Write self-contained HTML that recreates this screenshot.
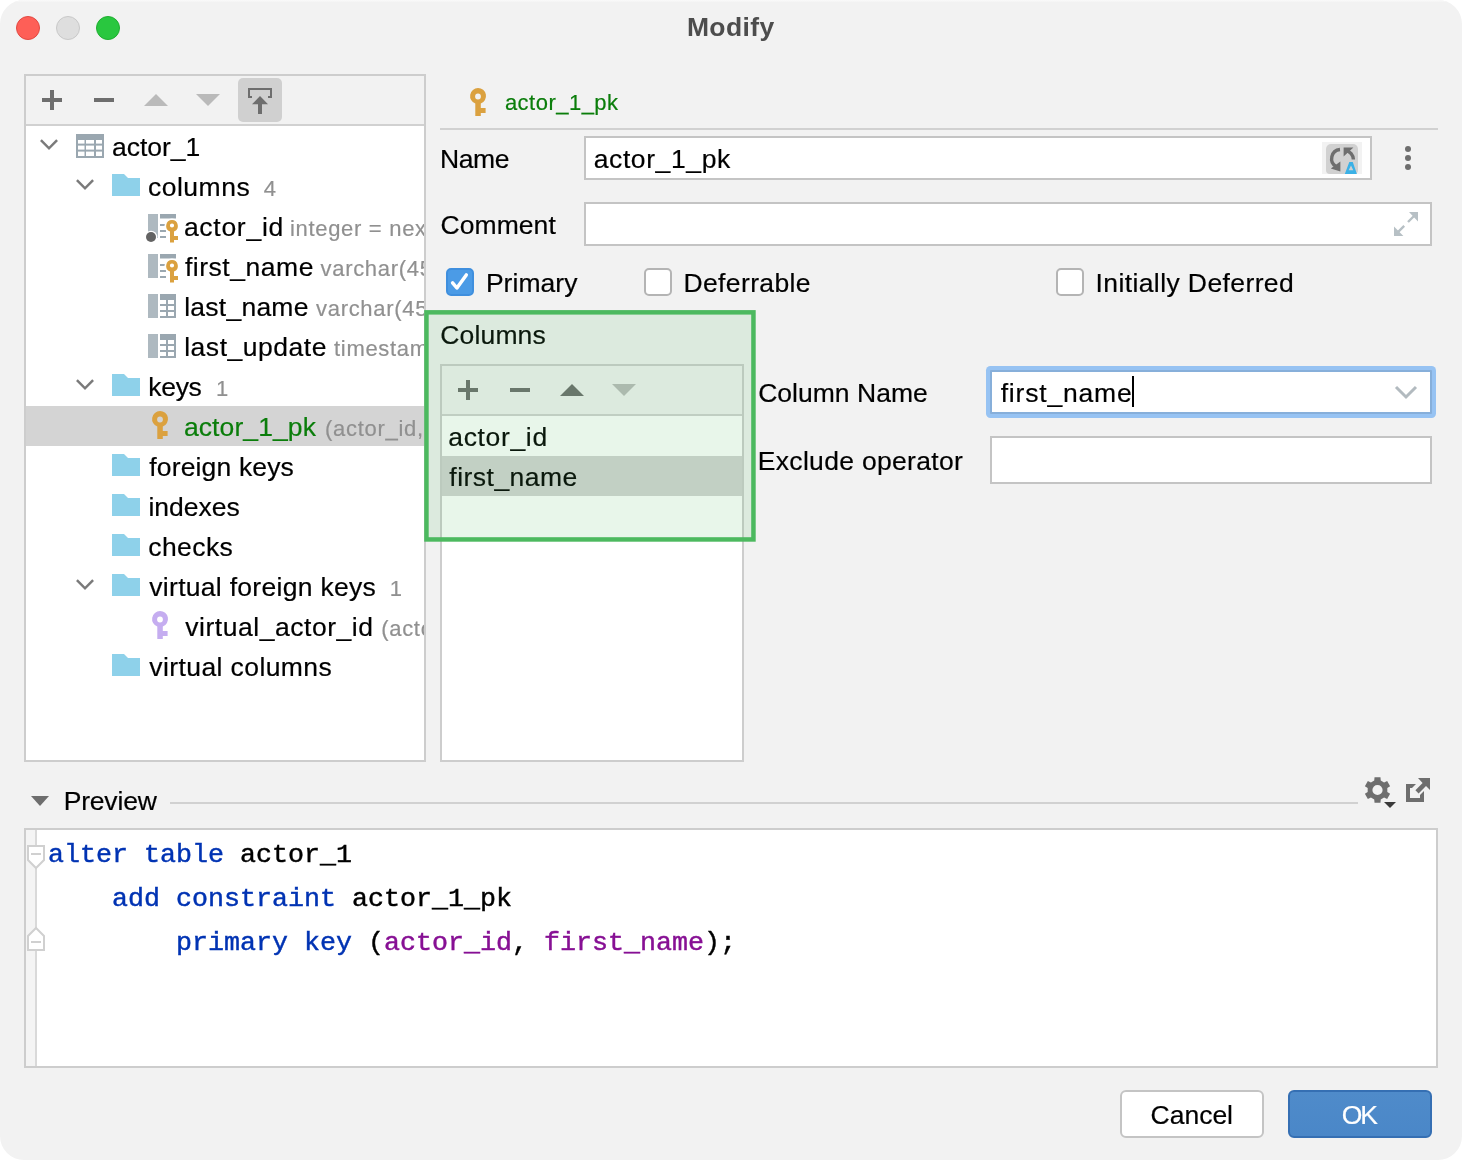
<!DOCTYPE html>
<html><head><meta charset="utf-8"><title>Modify</title>
<style>
*{box-sizing:border-box;margin:0;padding:0}
html,body{width:1462px;height:1160px;background:#fff;overflow:hidden}
body{font-family:"Liberation Sans",sans-serif;color:#000;position:relative}
#win{position:absolute;left:0;top:0;width:1462px;height:1160px;background:#f2f2f2;border-radius:24px;overflow:hidden}
.a{position:absolute}
.t{position:absolute;white-space:pre;line-height:40px;height:40px;-webkit-text-stroke:0.2px}
.clip{position:absolute;left:0;top:0;height:1160px;overflow:hidden}
.tl{position:absolute;top:16px;width:24px;height:24px;border-radius:50%}
.box{position:absolute;border:2px solid #cdcdcd;background:#fff}
.inp{position:absolute;border:2px solid #c4c4c4;background:#fff}
.mono{font-family:"Liberation Mono",monospace;font-size:26.66px;position:absolute;white-space:pre;line-height:44px;height:44px;left:48px;color:#000;-webkit-text-stroke:0.45px}
.kw{color:#0033b3}.id{color:#871094}
svg{position:absolute;overflow:visible}
#txt{position:absolute;left:0;top:0;width:1462px;height:1160px;will-change:transform}
.cb{position:absolute;top:268px;width:28px;height:28px;border:2px solid #b4b4b4;border-radius:5px;background:#fff}
</style></head><body>
<div id="win">
<div class="a" style="left:0;top:0;width:1462px;height:2px;background:linear-gradient(#fafafa,#f4f4f4)"></div>
<div class="tl" style="left:16px;background:#fe5f57;border:1px solid #e14942"></div>
<div class="tl" style="left:56px;background:#dedede;border:1px solid #c8c8c8"></div>
<div class="tl" style="left:96px;background:#29c73f;border:1px solid #1fae30"></div>
<div class="box" style="left:24px;top:74px;width:402px;height:688px"></div>
<div class="a" style="left:26px;top:76px;width:398px;height:48px;background:#f2f2f2"></div>
<div class="a" style="left:26px;top:124px;width:398px;height:2px;background:#d1d1d1"></div>
<svg style="left:42px;top:90px" width="20" height="20" viewBox="0 0 20 20"><path d="M8 0h4v8h8v4h-8v8h-4v-8h-8v-4h8z" fill="#6e6e6e"/></svg>
<svg style="left:94px;top:98px" width="20" height="4" viewBox="0 0 20 4"><rect width="20" height="4" fill="#6e6e6e"/></svg>
<svg style="left:144px;top:94px" width="24" height="12" viewBox="0 0 24 12"><path d="M12 0L24 12H0z" fill="#bababa"/></svg>
<svg style="left:196px;top:94px" width="24" height="12" viewBox="0 0 24 12"><path d="M0 0H24L12 12z" fill="#bababa"/></svg>
<div class="a" style="left:238px;top:78px;width:44px;height:44px;background:#d0d0d0;border-radius:5px"></div>
<svg style="left:248px;top:88px" width="24" height="26" viewBox="0 0 24 26"><path d="M0 10V0H24V10H20V8H22V2H2V8H4V10Z" fill="#6e6e6e"/><path d="M12 8L20 16.3H14V26H10V16.3H4Z" fill="#6e6e6e"/></svg>
<div class="a" style="left:26px;top:406px;width:398px;height:40px;background:#d4d4d4"></div>
<svg style="left:39.2px;top:137.6px" width="20" height="12" viewBox="0 0 20 12"><path d="M1.9 2.2L10 10.3L18.1 2.2" fill="none" stroke="#7a7a7a" stroke-width="2.5"/></svg>
<svg style="left:76px;top:134px" width="28" height="24" viewBox="0 0 28 24"><rect width="28" height="24" fill="#9aa7b0"/><rect x="2" y="6" width="6.5" height="3.5999999999999996" fill="#fff"/><rect x="2" y="11.6" width="6.5" height="4.0" fill="#fff"/><rect x="2" y="17.6" width="6.5" height="4.399999999999999" fill="#fff"/><rect x="10" y="6" width="8" height="3.5999999999999996" fill="#fff"/><rect x="10" y="11.6" width="8" height="4.0" fill="#fff"/><rect x="10" y="17.6" width="8" height="4.399999999999999" fill="#fff"/><rect x="20" y="6" width="6" height="3.5999999999999996" fill="#fff"/><rect x="20" y="11.6" width="6" height="4.0" fill="#fff"/><rect x="20" y="17.6" width="6" height="4.399999999999999" fill="#fff"/></svg>
<svg style="left:75px;top:177.6px" width="20" height="12" viewBox="0 0 20 12"><path d="M1.9 2.2L10 10.3L18.1 2.2" fill="none" stroke="#7a7a7a" stroke-width="2.5"/></svg>
<svg style="left:112px;top:174px" width="28" height="22" viewBox="0 0 28 22"><path d="M0 0H12L16 4H28V22H0z" fill="#8ed1ea"/></svg>
<svg style="left:148px;top:214px" width="28" height="24" viewBox="0 0 28 24"><rect x="0" y="0" width="10" height="24" fill="#aeb9c0"/><rect x="12" y="0" width="16" height="4.5" fill="#9aa7b0"/><rect x="12" y="10" width="6" height="2" fill="#9aa7b0"/><rect x="12" y="16" width="6" height="2" fill="#9aa7b0"/><rect x="12" y="22" width="6" height="2" fill="#9aa7b0"/><circle cx="24" cy="12" r="7.6" fill="#fff"/><rect x="20.5" y="14" width="7" height="15" fill="#fff"/><rect x="24" y="20.5" width="7.5" height="7" fill="#fff"/><path fill-rule="evenodd" d="M24 6A6 6 0 0 1 26 17.6V22H30V26H26V28.4H22V17.6A6 6 0 0 1 24 6ZM24 9.4A2.1 2.1 0 1 0 24 13.6A2.1 2.1 0 1 0 24 9.4Z" fill="#dba13f"/><circle cx="3" cy="23" r="6.3" fill="#fff"/><circle cx="3" cy="23" r="5" fill="#636363"/></svg>
<svg style="left:148px;top:254px" width="28" height="24" viewBox="0 0 28 24"><rect x="0" y="0" width="10" height="24" fill="#aeb9c0"/><rect x="12" y="0" width="16" height="4.5" fill="#9aa7b0"/><rect x="12" y="10" width="6" height="2" fill="#9aa7b0"/><rect x="12" y="16" width="6" height="2" fill="#9aa7b0"/><rect x="12" y="22" width="6" height="2" fill="#9aa7b0"/><circle cx="24" cy="12" r="7.6" fill="#fff"/><rect x="20.5" y="14" width="7" height="15" fill="#fff"/><rect x="24" y="20.5" width="7.5" height="7" fill="#fff"/><path fill-rule="evenodd" d="M24 6A6 6 0 0 1 26 17.6V22H30V26H26V28.4H22V17.6A6 6 0 0 1 24 6ZM24 9.4A2.1 2.1 0 1 0 24 13.6A2.1 2.1 0 1 0 24 9.4Z" fill="#dba13f"/></svg>
<svg style="left:148px;top:294px" width="28" height="24" viewBox="0 0 28 24"><rect x="0" y="0" width="10" height="24" fill="#aeb9c0"/><rect x="12" y="0" width="16" height="24" fill="#9aa7b0"/><rect x="12" y="6" width="6" height="4" fill="#fff"/><rect x="20" y="6" width="6" height="4" fill="#fff"/><rect x="12" y="12" width="6" height="4" fill="#fff"/><rect x="20" y="12" width="6" height="4" fill="#fff"/><rect x="12" y="18" width="6" height="4" fill="#fff"/><rect x="20" y="18" width="6" height="4" fill="#fff"/></svg>
<svg style="left:148px;top:334px" width="28" height="24" viewBox="0 0 28 24"><rect x="0" y="0" width="10" height="24" fill="#aeb9c0"/><rect x="12" y="0" width="16" height="24" fill="#9aa7b0"/><rect x="12" y="6" width="6" height="4" fill="#fff"/><rect x="20" y="6" width="6" height="4" fill="#fff"/><rect x="12" y="12" width="6" height="4" fill="#fff"/><rect x="20" y="12" width="6" height="4" fill="#fff"/><rect x="12" y="18" width="6" height="4" fill="#fff"/><rect x="20" y="18" width="6" height="4" fill="#fff"/></svg>
<svg style="left:75px;top:377.6px" width="20" height="12" viewBox="0 0 20 12"><path d="M1.9 2.2L10 10.3L18.1 2.2" fill="none" stroke="#7a7a7a" stroke-width="2.5"/></svg>
<svg style="left:112px;top:374px" width="28" height="22" viewBox="0 0 28 22"><path d="M0 0H12L16 4H28V22H0z" fill="#8ed1ea"/></svg>
<svg style="left:152.3px;top:411.4px" width="16" height="28" viewBox="0 0 16 28"><path fill-rule="evenodd" d="M8 0A8 8 0 0 1 10.8 15.5V20H15.6V25H10.8V28H5.3V15.5A8 8 0 0 1 8 0ZM8 5.6A2.9 2.9 0 1 0 8 11.4A2.9 2.9 0 1 0 8 5.6Z" fill="#dba13f"/></svg>
<svg style="left:112px;top:454px" width="28" height="22" viewBox="0 0 28 22"><path d="M0 0H12L16 4H28V22H0z" fill="#8ed1ea"/></svg>
<svg style="left:112px;top:494px" width="28" height="22" viewBox="0 0 28 22"><path d="M0 0H12L16 4H28V22H0z" fill="#8ed1ea"/></svg>
<svg style="left:112px;top:534px" width="28" height="22" viewBox="0 0 28 22"><path d="M0 0H12L16 4H28V22H0z" fill="#8ed1ea"/></svg>
<svg style="left:75px;top:577.6px" width="20" height="12" viewBox="0 0 20 12"><path d="M1.9 2.2L10 10.3L18.1 2.2" fill="none" stroke="#7a7a7a" stroke-width="2.5"/></svg>
<svg style="left:112px;top:574px" width="28" height="22" viewBox="0 0 28 22"><path d="M0 0H12L16 4H28V22H0z" fill="#8ed1ea"/></svg>
<svg style="left:152.3px;top:611.4px" width="16" height="28" viewBox="0 0 16 28"><path fill-rule="evenodd" d="M8 0A8 8 0 0 1 10.8 15.5V20H15.6V25H10.8V28H5.3V15.5A8 8 0 0 1 8 0ZM8 5.6A2.9 2.9 0 1 0 8 11.4A2.9 2.9 0 1 0 8 5.6Z" fill="#c5adf0"/></svg>
<svg style="left:112px;top:654px" width="28" height="22" viewBox="0 0 28 22"><path d="M0 0H12L16 4H28V22H0z" fill="#8ed1ea"/></svg>
<svg style="left:470.3px;top:88px" width="16" height="28" viewBox="0 0 16 28"><path fill-rule="evenodd" d="M8 0A8 8 0 0 1 10.8 15.5V20H15.6V25H10.8V28H5.3V15.5A8 8 0 0 1 8 0ZM8 5.6A2.9 2.9 0 1 0 8 11.4A2.9 2.9 0 1 0 8 5.6Z" fill="#dba13f"/></svg>
<div class="a" style="left:440px;top:128px;width:998px;height:2px;background:#d1d1d1"></div>
<div class="inp" style="left:584px;top:136px;width:788px;height:44px"></div>
<div class="a" style="left:1322px;top:142px;width:40px;height:32px;background:#f2f2f2"></div>
<div class="a" style="left:1326px;top:144px;width:32px;height:30px;background:#d1d1d1;border-radius:5px 5px 4px 4px"></div>
<svg style="left:1326px;top:144px" width="32" height="30" viewBox="0 0 32 30"><path d="M14 5.5A9.2 9.2 0 0 0 10.2 22.6" fill="none" stroke="#6e6e6e" stroke-width="3.4"/><path d="M4.8 24.6L14.4 27.4L14.4 17.6Z" fill="#6e6e6e"/><path d="M19.5 6.5A9.2 9.2 0 0 1 27.4 15.6" fill="none" stroke="#6e6e6e" stroke-width="3.4"/><path d="M17.6 3.6H27.4L17.6 12.6Z" fill="#6e6e6e"/><path fill-rule="evenodd" d="M23.3 18H26.8L30.9 30H18.8ZM25 21.4L22.7 26.3H27.3Z" fill="#3bb1e6"/></svg>
<div class="a" style="left:1405px;top:146.3px;width:6px;height:6px;border-radius:50%;background:#6e6e6e"></div>
<div class="a" style="left:1405px;top:155.2px;width:6px;height:6px;border-radius:50%;background:#6e6e6e"></div>
<div class="a" style="left:1405px;top:164.0px;width:6px;height:6px;border-radius:50%;background:#6e6e6e"></div>
<div class="inp" style="left:584px;top:202px;width:848px;height:44px"></div>
<svg style="left:1394px;top:212px" width="24" height="24" viewBox="0 0 24 24"><path d="M15 0H24V9.6Z M0 14.4V24H9.4Z" fill="#b7c0c5"/><path d="M20 4L14 10M4.2 19.8L10.2 13.8" stroke="#b7c0c5" stroke-width="2.4" fill="none"/></svg>
<div class="cb" style="left:446px;background:#4b9be6;border-color:#3f8fde"></div>
<svg style="left:446px;top:268px" width="28" height="28" viewBox="0 0 28 28"><path d="M6.6 14.8L10.9 20L20.3 6.9" fill="none" stroke="#fff" stroke-width="3.5" stroke-linecap="round" stroke-linejoin="round"/></svg>
<div class="cb" style="left:644px"></div>
<div class="cb" style="left:1056px"></div>
<div class="box" style="left:440px;top:364px;width:304px;height:398px"></div>
<div class="a" style="left:442px;top:366px;width:300px;height:48px;background:#f2f2f2"></div>
<div class="a" style="left:442px;top:414px;width:300px;height:2px;background:#d1d1d1"></div>
<div class="a" style="left:442px;top:456px;width:300px;height:40px;background:#d4d4d4"></div>
<svg style="left:458px;top:380px" width="20" height="20" viewBox="0 0 20 20"><path d="M8 0h4v8h8v4h-8v8h-4v-8h-8v-4h8z" fill="#6e6e6e"/></svg>
<svg style="left:510px;top:388px" width="20" height="4" viewBox="0 0 20 4"><rect width="20" height="4" fill="#6e6e6e"/></svg>
<svg style="left:560px;top:384px" width="24" height="12" viewBox="0 0 24 12"><path d="M12 0L24 12H0z" fill="#6e6e6e"/></svg>
<svg style="left:612px;top:384px" width="24" height="12" viewBox="0 0 24 12"><path d="M0 0H24L12 12z" fill="#bababa"/></svg>
<div class="a" style="left:986px;top:366px;width:450px;height:52px;background:#97c3f3;border-radius:4.5px"></div>
<div class="a" style="left:990px;top:370px;width:442px;height:44px;background:#fff;border:2px solid #87afda;border-radius:1px"></div>
<div class="a" style="left:1132px;top:376px;width:2px;height:31px;background:#000"></div>
<svg style="left:1394px;top:384px" width="24" height="16" viewBox="0 0 24 16"><path d="M2 3L12 13L22 3" fill="none" stroke="#b2babf" stroke-width="3"/></svg>
<div class="inp" style="left:990px;top:436px;width:442px;height:48px"></div>
<svg style="left:31px;top:796px" width="18" height="10" viewBox="0 0 18 10"><path d="M0 0H18L9 10Z" fill="#6e6e6e"/></svg>
<div class="a" style="left:170px;top:802px;width:1188px;height:2px;background:#d1d1d1"></div>
<svg style="left:1365px;top:777px" width="25" height="26" viewBox="0 0 25 26"><path fill-rule="evenodd" d="M15.76 3.54L15.47 0.14L9.53 0.14L9.24 3.54L5.94 5.45L2.85 4.00L-0.12 9.14L2.68 11.09L2.68 14.91L-0.12 16.86L2.85 22.00L5.94 20.55L9.24 22.46L9.53 25.86L15.47 25.86L15.76 22.46L19.06 20.55L22.15 22.00L25.12 16.86L22.32 14.91L22.32 11.09L25.12 9.14L22.15 4.00L19.06 5.45ZM12.5 7.9A5.1 5.1 0 1 0 12.5 18.1A5.1 5.1 0 1 0 12.5 7.9Z" fill="#6e6e6e"/></svg>
<svg style="left:1384px;top:802px" width="12" height="6" viewBox="0 0 12 6"><path d="M0 0H12L6 6Z" fill="#3a3a3a"/></svg>
<svg style="left:1406px;top:778px" width="24" height="24" viewBox="0 0 24 24"><path d="M0 6H10L6 10H4V20H14V17L18 13V24H0Z" fill="#6e6e6e"/><path d="M12 0H24V12L20 8L12.6 15.4L9.4 12.2L16.6 5Z" fill="#6e6e6e"/></svg>
<div class="box" style="left:24px;top:828px;width:1414px;height:240px"></div>
<div class="a" style="left:26px;top:830px;width:9px;height:236px;background:#f4f4f4"></div>
<div class="a" style="left:35px;top:830px;width:2px;height:236px;background:#d9d9d9"></div>
<svg style="left:27px;top:845px" width="18" height="24" viewBox="0 0 18 24"><path d="M1 1H17V15L9 23L1 15Z" fill="#fff" stroke="#d0d0d0" stroke-width="2"/><rect x="4" y="8" width="10" height="2" fill="#d0d0d0"/></svg>
<svg style="left:27px;top:927px" width="18" height="24" viewBox="0 0 18 24"><path d="M1 23H17V9L9 1L1 9Z" fill="#fff" stroke="#d0d0d0" stroke-width="2"/><rect x="4" y="14" width="10" height="2" fill="#d0d0d0"/></svg>
<div class="a" style="left:1120px;top:1090px;width:144px;height:48px;background:#fff;border:2px solid #c4c4c4;border-radius:6px"></div>
<div class="a" style="left:1288px;top:1090px;width:144px;height:48px;background:linear-gradient(#4f8bca,#4a87c8);border:2px solid #356fb3;border-radius:6px"></div>
<div id="txt">
<span class="t" style="left:686.90px;top:7.00px;font-size:26.5px;letter-spacing:0.373px;color:#4d4d4d;font-weight:bold;-webkit-text-stroke:0">Modify</span>
<span class="t" style="left:112.00px;top:127.00px;font-size:26.5px;letter-spacing:-0.009px;color:#000">actor_1</span>
<span class="t" style="left:148.00px;top:167.00px;font-size:26.5px;letter-spacing:0.496px;color:#000">columns</span>
<span class="t" style="left:263.70px;top:169.00px;font-size:22px;letter-spacing:0.000px;color:#909090">4</span>
<span class="t" style="left:183.90px;top:207.00px;font-size:26.5px;letter-spacing:0.723px;color:#000">actor_id</span>
<div class="clip" style="width:424px"><span class="t" style="left:289.90px;top:209.00px;font-size:22px;letter-spacing:0.700px;color:#909090">integer = nextval(</span></div>
<span class="t" style="left:184.90px;top:247.00px;font-size:26.5px;letter-spacing:0.536px;color:#000">first_name</span>
<div class="clip" style="width:424px"><span class="t" style="left:320.50px;top:249.00px;font-size:22px;letter-spacing:0.700px;color:#909090">varchar(45)</span></div>
<span class="t" style="left:184.20px;top:287.00px;font-size:26.5px;letter-spacing:0.247px;color:#000">last_name</span>
<div class="clip" style="width:424px"><span class="t" style="left:316.00px;top:289.00px;font-size:22px;letter-spacing:0.700px;color:#909090">varchar(45)</span></div>
<span class="t" style="left:184.20px;top:327.00px;font-size:26.5px;letter-spacing:0.521px;color:#000">last_update</span>
<div class="clip" style="width:424px"><span class="t" style="left:334.00px;top:329.00px;font-size:22px;letter-spacing:0.700px;color:#909090">timestamp</span></div>
<span class="t" style="left:148.30px;top:367.00px;font-size:26.5px;letter-spacing:-0.313px;color:#000">keys</span>
<span class="t" style="left:215.90px;top:369.00px;font-size:22px;letter-spacing:0.000px;color:#909090">1</span>
<span class="t" style="left:183.90px;top:407.00px;font-size:26.5px;letter-spacing:0.104px;color:#0a7d0a">actor_1_pk</span>
<div class="clip" style="width:424px"><span class="t" style="left:325.10px;top:409.00px;font-size:22px;letter-spacing:0.700px;color:#909090">(actor_id, first_name)</span></div>
<span class="t" style="left:149.30px;top:447.00px;font-size:26.5px;letter-spacing:0.152px;color:#000">foreign keys</span>
<span class="t" style="left:148.50px;top:487.00px;font-size:26.5px;letter-spacing:-0.015px;color:#000">indexes</span>
<span class="t" style="left:148.30px;top:527.00px;font-size:26.5px;letter-spacing:0.415px;color:#000">checks</span>
<span class="t" style="left:149.30px;top:567.00px;font-size:26.5px;letter-spacing:0.291px;color:#000">virtual foreign keys</span>
<span class="t" style="left:389.70px;top:569.00px;font-size:22px;letter-spacing:0.000px;color:#909090">1</span>
<span class="t" style="left:185.20px;top:607.00px;font-size:26.5px;letter-spacing:0.542px;color:#000">virtual_actor_id</span>
<div class="clip" style="width:424px"><span class="t" style="left:381.20px;top:609.00px;font-size:22px;letter-spacing:0.700px;color:#909090">(actor_id) → actor</span></div>
<span class="t" style="left:149.30px;top:647.00px;font-size:26.5px;letter-spacing:0.409px;color:#000">virtual columns</span>
<span class="t" style="left:504.90px;top:83.00px;font-size:22px;letter-spacing:0.483px;color:#0a7d0a">actor_1_pk</span>
<span class="t" style="left:439.90px;top:139.00px;font-size:26.5px;letter-spacing:-0.350px;color:#000">Name</span>
<span class="t" style="left:593.70px;top:139.00px;font-size:26.5px;letter-spacing:0.604px;color:#000">actor_1_pk</span>
<span class="t" style="left:440.50px;top:205.00px;font-size:26.5px;letter-spacing:0.067px;color:#000">Comment</span>
<span class="t" style="left:485.90px;top:263.00px;font-size:26.5px;letter-spacing:0.046px;color:#000">Primary</span>
<span class="t" style="left:683.50px;top:263.00px;font-size:26.5px;letter-spacing:0.368px;color:#000">Deferrable</span>
<span class="t" style="left:1095.50px;top:263.00px;font-size:26.5px;letter-spacing:0.398px;color:#000">Initially Deferred</span>
<span class="t" style="left:440.30px;top:315.00px;font-size:26.5px;letter-spacing:0.148px;color:#000">Columns</span>
<span class="t" style="left:448.30px;top:417.00px;font-size:26.5px;letter-spacing:0.652px;color:#000">actor_id</span>
<span class="t" style="left:449.30px;top:457.00px;font-size:26.5px;letter-spacing:0.480px;color:#000">first_name</span>
<span class="t" style="left:758.20px;top:373.00px;font-size:26.5px;letter-spacing:0.017px;color:#000">Column Name</span>
<span class="t" style="left:1000.70px;top:373.00px;font-size:26.5px;letter-spacing:0.814px;color:#000">first_name</span>
<span class="t" style="left:757.80px;top:441.00px;font-size:26.5px;letter-spacing:0.312px;color:#000">Exclude operator</span>
<span class="t" style="left:63.70px;top:781.00px;font-size:26.5px;letter-spacing:-0.186px;color:#000">Preview</span>
<span class="t" style="left:1150.60px;top:1095.00px;font-size:26.5px;letter-spacing:-0.020px;color:#000">Cancel</span>
<span class="t" style="left:1341.70px;top:1095.00px;font-size:26.5px;letter-spacing:-2.013px;color:#fff">OK</span>
<div class="mono" style="top:833px"><span class="kw">alter table</span> actor_1</div>
<div class="mono" style="top:877px">    <span class="kw">add constraint</span> actor_1_pk</div>
<div class="mono" style="top:921px">        <span class="kw">primary key</span> (<span class="id">actor_id</span>, <span class="id">first_name</span>);</div>
</div>
<svg style="left:0;top:0" width="1462" height="1160"><rect x="426.45" y="312.35" width="327" height="227.1" fill="rgba(76,185,95,0.13)" stroke="#4cb95f" stroke-width="4.5"/></svg>
</div>
</body></html>
